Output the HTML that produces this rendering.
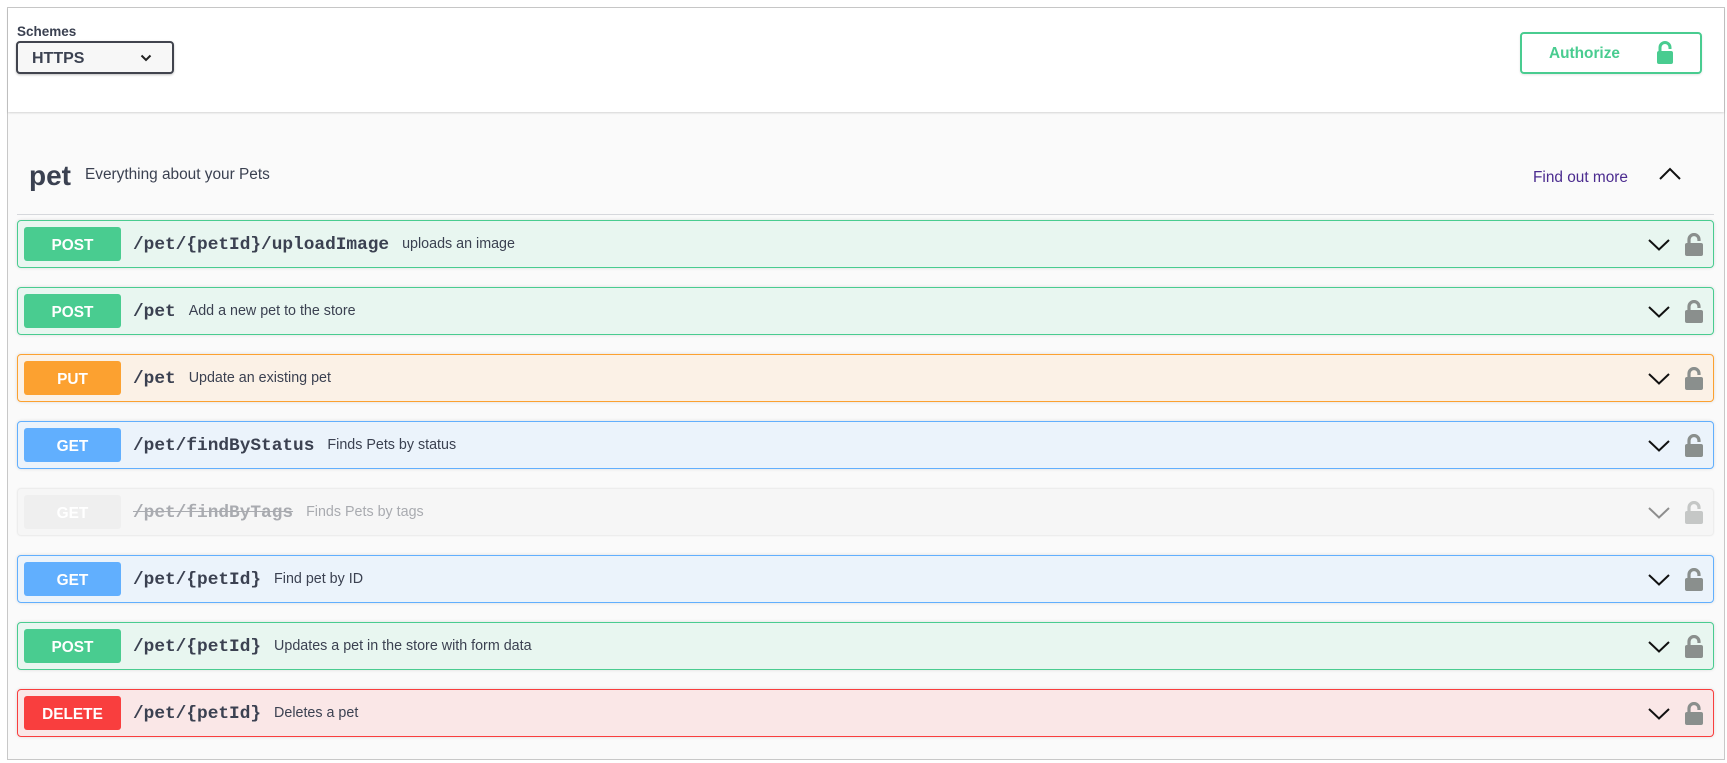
<!DOCTYPE html>
<html><head><meta charset="utf-8"><style>
*{box-sizing:border-box;margin:0;padding:0}
body{width:1727px;height:763px;background:#fff;font-family:"Liberation Sans",sans-serif;position:relative;overflow:hidden}
.frame{position:absolute;left:7px;top:7px;width:1718px;height:753px;border:1px solid #c8c8c8;background:#fafafa}
.top{position:absolute;left:8px;top:8px;width:1716px;height:104px;background:#fff;box-shadow:0 1px 2px rgba(0,0,0,.15)}
.lbl{position:absolute;left:17px;top:24px;font-size:13.5px;font-weight:bold;color:#3b4151}
.sel{position:absolute;left:16px;top:41px;width:158px;height:33px;border:2px solid #41444e;border-radius:4px;background:#f7f7f7;box-shadow:0 1px 2px rgba(0,0,0,.25);font-size:16px;font-weight:bold;color:#3b4151;padding:7px 0 0 14px}
.sel svg{position:absolute;right:20px;top:11px}
.auth{position:absolute;left:1520px;top:32px;width:182px;height:42px;border:2px solid #49cc90;border-radius:4px;color:#49cc90;font-size:15.4px;font-weight:bold;padding:11px 0 0 27px;box-shadow:0 1px 2px rgba(0,0,0,.1)}
.auth svg{position:absolute;left:134px;top:7px}
.pet{position:absolute;left:29px;top:160px;font-size:28px;font-weight:bold;color:#3b4151}
.tdesc{position:absolute;left:85px;top:166px;font-size:15.4px;color:#3b4151}
.find{position:absolute;left:1533px;top:169px;font-size:15.4px;color:#4b2b8f}
.up{position:absolute;left:1659px;top:167px}
.sep{position:absolute;left:17px;top:214px;width:1697px;height:1px;background:#d6d8dc}
.row{position:absolute;left:17px;width:1697px;height:48px;border:1px solid;border-radius:4px;box-shadow:0 0 3px rgba(0,0,0,.12)}
.b{position:absolute;left:6px;top:6px;width:97px;height:34px;border-radius:3px;color:#fff;font-size:15.4px;font-weight:bold;text-align:center;line-height:37px}
.p{position:absolute;left:115px;top:14px;font-family:"Liberation Mono",monospace;font-weight:bold;font-size:17.8px;color:#3b4151;white-space:nowrap}
.p span{font-family:"Liberation Sans",sans-serif;font-weight:normal;font-size:14.3px;margin-left:13px;position:relative;top:-1px}
.chev{position:absolute;left:1630px;top:18px}
.lock{position:absolute;left:1666px;top:12px}
.post{background:#e8f6f0;border-color:#49cc90}.post .b{background:#49cc90}
.put{background:#fbf1e6;border-color:#fca130}.put .b{background:#fca130}
.get{background:#ebf3fb;border-color:#61affe}.get .b{background:#61affe}
.del{background:#fae7e7;border-color:#f93e3e}.del .b{background:#f93e3e}
.dep{background:#f6f6f6;border-color:#ededed;box-shadow:0 0 2px rgba(0,0,0,.05)}.dep .b{background:#efefef}
.dep .p{color:#a9abb0}.dep .p s{text-decoration:line-through}.dep .p span{color:#a9abb0}
.dep .chev,.dep .lock{opacity:.45}
</style></head><body>
<div class="frame"></div>
<div class="top"></div>
<div class="lbl">Schemes</div>
<div class="sel">HTTPS<svg width="12" height="8" viewBox="0 0 12 8"><path d="M1.5 1.5 6 6l4.5-4.5" fill="none" stroke="#222" stroke-width="2"/></svg></div>
<div class="auth">Authorize<svg width="18" height="24" viewBox="0 0 18 24"><path d="M4 11V6.5a5 5 0 0 1 10 0V8" fill="none" stroke="#49cc90" stroke-width="3"/><rect x="1" y="10" width="16" height="13" rx="2" fill="#49cc90"/></svg></div>
<div class="pet">pet</div>
<div class="tdesc">Everything about your Pets</div>
<div class="find">Find out more</div>
<svg class="up" width="22" height="14" viewBox="0 0 22 14"><path d="M1 12 11 2l10 10" fill="none" stroke="#111" stroke-width="2"/></svg>
<div class="sep"></div>

<div class="row post" style="top:220px"><div class="b">POST</div><div class="p">/pet/{petId}/uploadImage<span>uploads an image</span></div><svg class="chev" width="22" height="12" viewBox="0 0 22 12"><path d="M1 1 11 10.5 21 1" fill="none" stroke="#111" stroke-width="2"/></svg><svg class="lock" width="20" height="24" viewBox="0 0 20 24"><path d="M5 11V6.5a5 5 0 0 1 10 0V8" fill="none" stroke="#8a8f8d" stroke-width="3.2"/><rect x="1" y="10" width="18" height="13" rx="2" fill="#8a8f8d"/></svg></div>
<div class="row post" style="top:287px"><div class="b">POST</div><div class="p">/pet<span>Add a new pet to the store</span></div><svg class="chev" width="22" height="12" viewBox="0 0 22 12"><path d="M1 1 11 10.5 21 1" fill="none" stroke="#111" stroke-width="2"/></svg><svg class="lock" width="20" height="24" viewBox="0 0 20 24"><path d="M5 11V6.5a5 5 0 0 1 10 0V8" fill="none" stroke="#8a8f8d" stroke-width="3.2"/><rect x="1" y="10" width="18" height="13" rx="2" fill="#8a8f8d"/></svg></div>
<div class="row put" style="top:354px"><div class="b">PUT</div><div class="p">/pet<span>Update an existing pet</span></div><svg class="chev" width="22" height="12" viewBox="0 0 22 12"><path d="M1 1 11 10.5 21 1" fill="none" stroke="#111" stroke-width="2"/></svg><svg class="lock" width="20" height="24" viewBox="0 0 20 24"><path d="M5 11V6.5a5 5 0 0 1 10 0V8" fill="none" stroke="#8a8f8d" stroke-width="3.2"/><rect x="1" y="10" width="18" height="13" rx="2" fill="#8a8f8d"/></svg></div>
<div class="row get" style="top:421px"><div class="b">GET</div><div class="p">/pet/findByStatus<span>Finds Pets by status</span></div><svg class="chev" width="22" height="12" viewBox="0 0 22 12"><path d="M1 1 11 10.5 21 1" fill="none" stroke="#111" stroke-width="2"/></svg><svg class="lock" width="20" height="24" viewBox="0 0 20 24"><path d="M5 11V6.5a5 5 0 0 1 10 0V8" fill="none" stroke="#8a8f8d" stroke-width="3.2"/><rect x="1" y="10" width="18" height="13" rx="2" fill="#8a8f8d"/></svg></div>
<div class="row dep" style="top:488px"><div class="b">GET</div><div class="p"><s>/pet/findByTags</s><span>Finds Pets by tags</span></div><svg class="chev" width="22" height="12" viewBox="0 0 22 12"><path d="M1 1 11 10.5 21 1" fill="none" stroke="#111" stroke-width="2"/></svg><svg class="lock" width="20" height="24" viewBox="0 0 20 24"><path d="M5 11V6.5a5 5 0 0 1 10 0V8" fill="none" stroke="#8a8f8d" stroke-width="3.2"/><rect x="1" y="10" width="18" height="13" rx="2" fill="#8a8f8d"/></svg></div>
<div class="row get" style="top:555px"><div class="b">GET</div><div class="p">/pet/{petId}<span>Find pet by ID</span></div><svg class="chev" width="22" height="12" viewBox="0 0 22 12"><path d="M1 1 11 10.5 21 1" fill="none" stroke="#111" stroke-width="2"/></svg><svg class="lock" width="20" height="24" viewBox="0 0 20 24"><path d="M5 11V6.5a5 5 0 0 1 10 0V8" fill="none" stroke="#8a8f8d" stroke-width="3.2"/><rect x="1" y="10" width="18" height="13" rx="2" fill="#8a8f8d"/></svg></div>
<div class="row post" style="top:622px"><div class="b">POST</div><div class="p">/pet/{petId}<span>Updates a pet in the store with form data</span></div><svg class="chev" width="22" height="12" viewBox="0 0 22 12"><path d="M1 1 11 10.5 21 1" fill="none" stroke="#111" stroke-width="2"/></svg><svg class="lock" width="20" height="24" viewBox="0 0 20 24"><path d="M5 11V6.5a5 5 0 0 1 10 0V8" fill="none" stroke="#8a8f8d" stroke-width="3.2"/><rect x="1" y="10" width="18" height="13" rx="2" fill="#8a8f8d"/></svg></div>
<div class="row del" style="top:689px"><div class="b">DELETE</div><div class="p">/pet/{petId}<span>Deletes a pet</span></div><svg class="chev" width="22" height="12" viewBox="0 0 22 12"><path d="M1 1 11 10.5 21 1" fill="none" stroke="#111" stroke-width="2"/></svg><svg class="lock" width="20" height="24" viewBox="0 0 20 24"><path d="M5 11V6.5a5 5 0 0 1 10 0V8" fill="none" stroke="#8a8f8d" stroke-width="3.2"/><rect x="1" y="10" width="18" height="13" rx="2" fill="#8a8f8d"/></svg></div>
</body></html>
